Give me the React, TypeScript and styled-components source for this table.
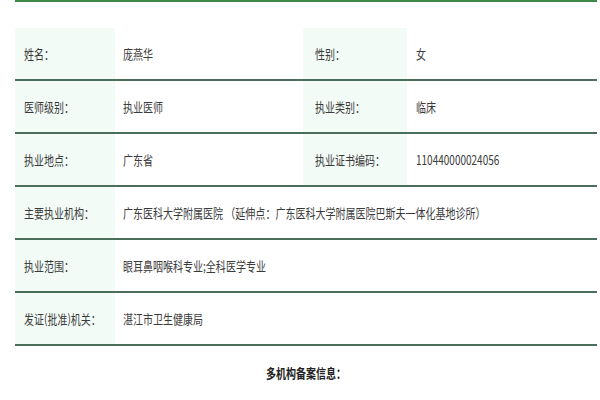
import React from "react";
import styled, { createGlobalStyle } from "styled-components";

const Global = createGlobalStyle`
  html, body { margin: 0; padding: 0; background: #fff; }
  body { font-family: "Noto Sans CJK SC", "Noto Sans", sans-serif; color: #333; }
`;

const Page = styled.div`
  width: 582px;
  padding: 0 3px 0 15px;
`;

const TopRule = styled.div`
  height: 0;
  border-bottom: 2px solid #3d8a4c;
  margin-bottom: 26px;
`;

const Sheet = styled.div`
  display: flex;
  flex-direction: column;
`;

const Row = styled.div`
  display: grid;
  grid-template-columns: 100px 188px 104px 1fr;
  height: 51px;
  border-bottom: 2px solid #4b6d5b;
`;

const Cell = styled.div<{ $label?: boolean; $span?: number; $pad?: number }>`
  display: flex;
  align-items: center;
  padding-left: ${(p) => p.$pad ?? 9}px;
  background: ${(p) => (p.$label ? "#f2fbf6" : "#fff")};
  grid-column: span ${(p) => p.$span ?? 1};
  overflow: visible;
  white-space: nowrap;
`;

const Text = styled.span<{ $bold?: boolean }>`
  display: inline-block;
  font-size: 13px;
  font-weight: ${(p) => (p.$bold ? 700 : 400)};
  color: ${(p) => (p.$bold ? "#222" : "#3a3a3a")};
  transform: scaleX(0.77);
  transform-origin: left center;
`;

const Heading = styled.div`
  display: flex;
  justify-content: center;
  margin-top: 17px;
  padding-left: 24px;
`;

type Pair = [string, string];
const rows: (Pair | [Pair, Pair])[] = [
  [["姓名：", "庞燕华"], ["性别：", "女"]],
  [["医师级别：", "执业医师"], ["执业类别：", "临床"]],
  [["执业地点：", "广东省"], ["执业证书编码：", "110440000024056"]],
  ["主要执业机构：", "广东医科大学附属医院 （延伸点：广东医科大学附属医院巴斯夫一体化基地诊所）"],
  ["执业范围：", "眼耳鼻咽喉科专业;全科医学专业"],
  ["发证(批准)机关：", "湛江市卫生健康局"],
];

export default function App() {
  return (
    <>
      <Global />
      <Page>
        <TopRule />
        <Sheet>
          {rows.map((r, i) =>
            Array.isArray(r[0]) ? (
              <Row key={i}>
                <Cell $label>
                  <Text>{(r as [Pair, Pair])[0][0]}</Text>
                </Cell>
                <Cell $pad={8}>
                  <Text>{(r as [Pair, Pair])[0][1]}</Text>
                </Cell>
                <Cell $label $pad={12}>
                  <Text>{(r as [Pair, Pair])[1][0]}</Text>
                </Cell>
                <Cell>
                  <Text>{(r as [Pair, Pair])[1][1]}</Text>
                </Cell>
              </Row>
            ) : (
              <Row key={i}>
                <Cell $label>
                  <Text>{(r as Pair)[0]}</Text>
                </Cell>
                <Cell $span={3} $pad={8}>
                  <Text>{(r as Pair)[1]}</Text>
                </Cell>
              </Row>
            )
          )}
        </Sheet>
        <Heading>
          <Text $bold>多机构备案信息：</Text>
        </Heading>
      </Page>
    </>
  );
}
